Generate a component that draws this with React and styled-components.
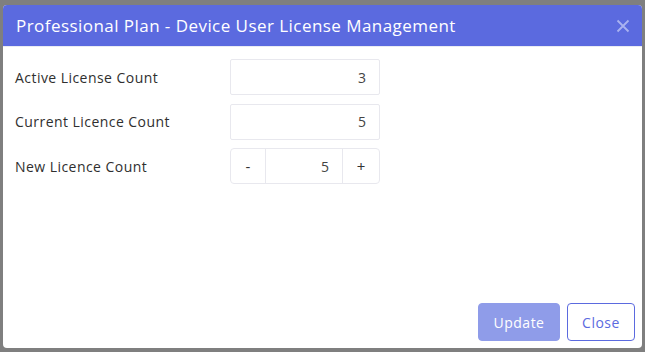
import React from "react";
import styled, { createGlobalStyle } from "styled-components";

const Global = createGlobalStyle`
  html, body { margin: 0; padding: 0; }
  body {
    background: #7f7f7f;
    font-family: "Open Sans", "Liberation Sans", sans-serif;
    width: 645px;
    height: 352px;
    overflow: hidden;
  }
`;

const Page = styled.div`
  padding: 5px 3px 0 3px;
`;

const Modal = styled.div`
  width: 639px;
  height: 343px;
  background: #fff;
  border-radius: 4px;
  overflow: hidden;
  display: flex;
  flex-direction: column;
`;

const Header = styled.div`
  height: 41px;
  background: #5b6adf;
  display: flex;
  align-items: center;
  justify-content: space-between;
  padding: 0 12px 0 13px;
  border-bottom: 1px solid #e9ecf3;
`;

const Title = styled.h2`
  margin: 0;
  color: #fff;
  font-size: 17px;
  font-weight: 400;
  letter-spacing: 0.45px;
`;

const CloseX = styled.button`
  border: 0;
  background: none;
  padding: 0;
  width: 14px;
  height: 14px;
  display: flex;
  cursor: pointer;
`;

const Body = styled.div`
  flex: 1;
  display: flex;
  flex-direction: column;
  gap: 8.5px;
  padding: 12px 12px 0 12px;
`;

const Row = styled.div`
  display: grid;
  grid-template-columns: 215px 150px;
  align-items: center;
`;

const Label = styled.label`
  font-size: 14px;
  letter-spacing: 0.45px;
  color: #2f2f2f;
`;

const Field = styled.div`
  height: 34px;
  border: 1px solid #e8e8ee;
  border-radius: 2px;
  display: flex;
  align-items: center;
  justify-content: flex-end;
  padding: 0 13px;
  font-size: 14px;
  color: #444;
`;

const Stepper = styled.div`
  height: 34px;
  border: 1px solid #e8e8ee;
  border-radius: 4px;
  display: grid;
  grid-template-columns: 35px 1fr 37px;
`;

const StepBtn = styled.div`
  display: flex;
  align-items: center;
  justify-content: center;
  font-size: 15px;
  color: #333;
  border-left: ${p => (p.$right ? "1px solid #e8e8ee" : "0")};
  border-right: ${p => (p.$left ? "1px solid #e8e8ee" : "0")};
`;

const StepValue = styled.div`
  display: flex;
  align-items: center;
  justify-content: flex-end;
  padding-right: 13px;
  font-size: 14px;
  color: #444;
`;

const Footer = styled.div`
  display: flex;
  justify-content: flex-end;
  gap: 7px;
  padding: 0 7px 7px 0;
`;

const Button = styled.button`
  height: 38px;
  padding: 0;
  border-radius: 4px;
  font-family: inherit;
  font-size: 14px;
  letter-spacing: 0.5px;
  cursor: pointer;
  background: ${p => (p.$primary ? "#8f9ce9" : "#fff")};
  color: ${p => (p.$primary ? "#fff" : "#5b6adf")};
  border: 1px solid ${p => (p.$primary ? "#8f9ce9" : "#5b6adf")};
  width: ${p => (p.$primary ? "82px" : "68px")};
`;

export default function App() {
  return (
    <>
      <Global />
      <Page>
        <Modal>
          <Header>
            <Title>Professional Plan - Device User License Management</Title>
            <CloseX aria-label="close">
              <svg width="14" height="14" viewBox="0 0 14 14">
                <path d="M1.5 1.5 L12.5 12.5 M12.5 1.5 L1.5 12.5" stroke="#aab2f0" strokeWidth="1.8" />
              </svg>
            </CloseX>
          </Header>
          <Body>
            <Row>
              <Label>Active License Count</Label>
              <Field>3</Field>
            </Row>
            <Row>
              <Label>Current Licence Count</Label>
              <Field>5</Field>
            </Row>
            <Row>
              <Label>New Licence Count</Label>
              <Stepper>
                <StepBtn $left>-</StepBtn>
                <StepValue>5</StepValue>
                <StepBtn $right>+</StepBtn>
              </Stepper>
            </Row>
          </Body>
          <Footer>
            <Button $primary>Update</Button>
            <Button>Close</Button>
          </Footer>
        </Modal>
      </Page>
    </>
  );
}
